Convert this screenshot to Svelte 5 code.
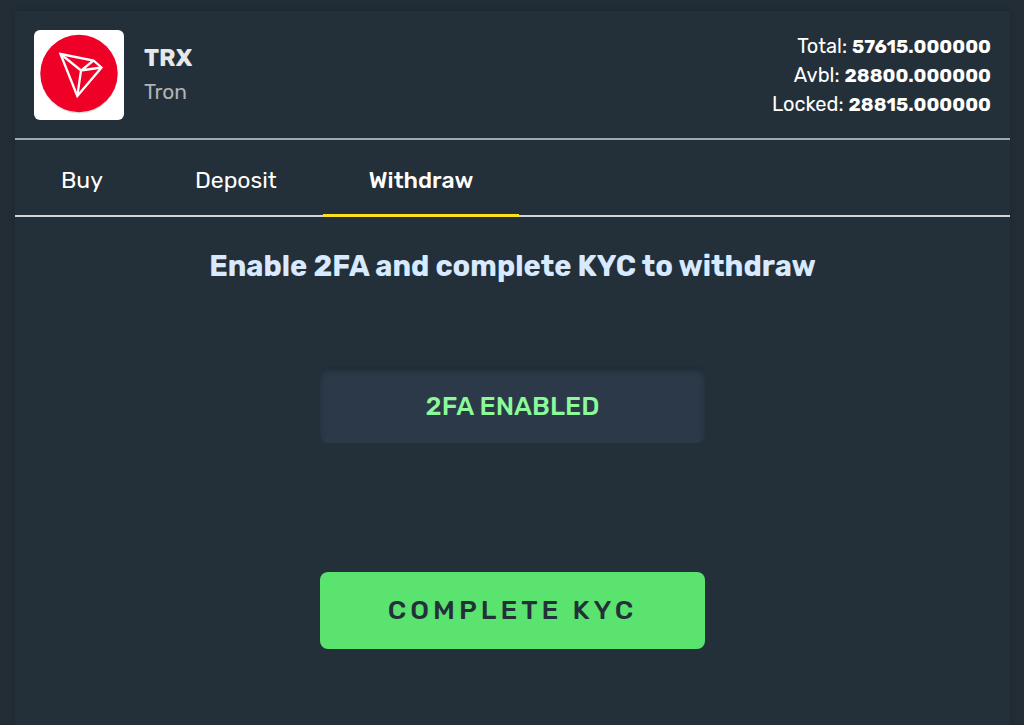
<script>
  const balances = [
    { label: 'Total', value: '57615.000000' },
    { label: 'Avbl', value: '28800.000000' },
    { label: 'Locked', value: '28815.000000' }
  ];
  const tabs = ['Buy', 'Deposit', 'Withdraw'];
  let active = $state('Withdraw');
</script>

<main class="card">
  <header class="summary">
    <div class="logo">
      <svg viewBox="0 0 90 90" role="img" aria-label="Tron">
        <circle cx="45" cy="45" r="38.5" fill="#c9ccd0" opacity="0.6" />
        <circle cx="45" cy="43.5" r="38.7" fill="#ef0027" />
        <g fill="none" stroke="#fff" stroke-width="2.3" stroke-linejoin="miter">
          <path d="M26.5 24 L59.5 30.5 L67.5 37.5 L43.3 66 Z" />
          <path d="M26.5 24 L47 40.5 L67.5 37.5 M59.5 30.5 L47 40.5 L43.3 66" />
        </g>
      </svg>
    </div>
    <div class="coin">
      <h1>TRX</h1>
      <p>Tron</p>
    </div>
    <ul class="balances">
      {#each balances as b}
        <li>{b.label}: <strong>{b.value}</strong></li>
      {/each}
    </ul>
  </header>

  <nav class="tabs">
    {#each tabs as tab}
      <button class="tab" class:active={active === tab} onclick={() => (active = tab)}>{tab}</button>
    {/each}
  </nav>

  <section class="content">
    <h2>Enable 2FA and complete KYC to withdraw</h2>
    <button class="action enabled">2FA ENABLED</button>
    <button class="action kyc">COMPLETE KYC</button>
  </section>
</main>

<style>
  :global(body) {
    background: #222d36;
  }
  :global(#app) {
    display: flow-root;
  }
  .card {
    box-sizing: border-box;
    min-height: calc(100vh - 11px);
    margin: 11px 14px 0 15px;
    background: #243039;
    box-shadow: 0 0 6px rgba(20, 28, 36, 0.3);
    color: #fff;
    font-family: Rubik, Roboto, sans-serif;
  }
  h1, h2, p, ul {
    margin: 0;
    padding: 0;
  }
  .summary {
    display: flex;
    align-items: center;
    padding: 19px 19px 18px;
    border-bottom: 2px solid #a2a7ab;
  }
  .logo {
    width: 90px;
    height: 90px;
    flex: none;
    border-radius: 6px;
    background: #fff;
  }
  .logo svg {
    display: block;
  }
  .coin {
    margin-left: 20px;
  }
  h1 {
    color: #e6e8eb;
    font-size: 24px;
    font-weight: 700;
    line-height: 34px;
  }
  .coin p {
    color: #afb3b8;
    font-size: 21px;
    line-height: 34px;
  }
  .balances {
    margin-left: auto;
    list-style: none;
    text-align: right;
    font-size: 20px;
    line-height: 29px;
  }
  .balances strong {
    font-size: 19px;
    font-weight: 700;
  }
  .tabs {
    display: flex;
    height: 75px;
    border-bottom: 2px solid #d3d5d7;
  }
  button {
    border: 0;
    font-family: inherit;
    cursor: pointer;
  }
  .tab {
    height: 77px;
    padding: 5px 46px 0;
    border-bottom: 3px solid transparent;
    background: none;
    color: #fff;
    font-size: 23px;
  }
  .tab.active {
    border-color: #fce01f;
    font-weight: 500;
  }
  .content {
    display: flex;
    flex-direction: column;
    align-items: center;
    padding: 30px 20px;
  }
  h2 {
    color: #d8eaff;
    font-size: 29px;
    font-weight: 700;
    line-height: 38px;
    text-align: center;
  }
  .action {
    width: 385px;
    max-width: 100%;
    height: 77px;
    border-radius: 8px;
    font-size: 26px;
  }
  .enabled {
    margin-top: 81px;
    padding-top: 5px;
    background: #2b3948;
    box-shadow: inset 0 5px 5px #212c38;
    color: #8cfa9a;
    font-weight: 500;
  }
  .kyc {
    margin-top: 129px;
    padding-bottom: 3px;
    background: #5ae36f;
    color: #243039;
    font-size: 27px;
    font-weight: 500;
    letter-spacing: 4px;
  }
</style>
